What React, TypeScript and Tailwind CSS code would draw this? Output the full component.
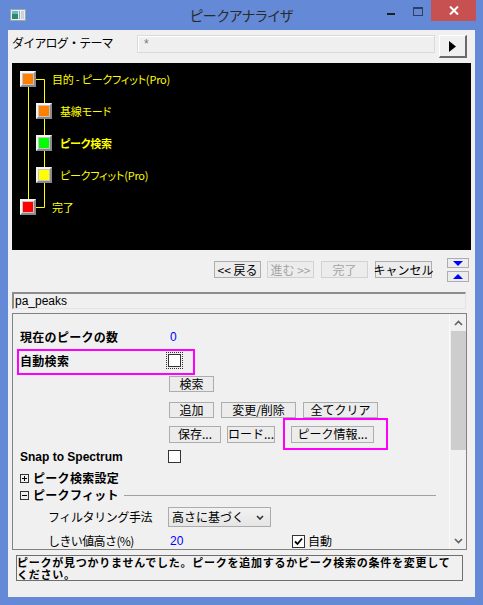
import React from 'react';

type BtnProps = { children: React.ReactNode; className?: string; disabled?: boolean };

function Btn({ children, className = '', disabled = false }: BtnProps) {
  return (
    <div
      className={`flex items-center justify-center border bg-[#ececec] text-[12px] leading-none whitespace-nowrap ${
        disabled ? 'border-[#d2d2d2] text-[#a3a3a3]' : 'border-[#adadad] text-black'
      } ${className}`}
    >
      {children}
    </div>
  );
}

function Check({ checked = false, focus = false }: { checked?: boolean; focus?: boolean }) {
  const box = (
    <div className="w-[13px] h-[13px] border border-[#333] bg-white flex items-center justify-center">
      {checked && (
        <svg width="9" height="9" viewBox="0 0 9 9">
          <path d="M1 4.5 L3.5 7 L8 1.5" stroke="#000" strokeWidth="1.8" fill="none" />
        </svg>
      )}
    </div>
  );
  if (!focus) return box;
  return <div className="p-[1px] border border-dotted border-[#333]">{box}</div>;
}

type NodeProps = { color: string; label: string; bold?: boolean; indent: string; gap: string };

function TreeNode({ color, label, bold = false, indent, gap }: NodeProps) {
  return (
    <div className={`flex items-center h-[32px] ${indent}`}>
      <div className="relative w-[16px] h-[16px] bg-[#c4c4c4] border-t-2 border-l-2 border-t-[#f4f4f4] border-l-[#f4f4f4] border-b-2 border-r-2 border-b-[#8a8a8a] border-r-[#8a8a8a] flex items-center justify-center">
        <div className={`w-[10px] h-[10px] ${color}`} />
      </div>
      <span
        className={`${gap} text-[11px] leading-none text-[#ffff00] [font-feature-settings:'palt'] tracking-[-0.2px] ${
          bold ? 'font-bold' : ''
        }`}
      >
        {label}
      </span>
    </div>
  );
}

function Chevron({ up }: { up?: boolean }) {
  return (
    <svg width="9" height="6" viewBox="0 0 9 6">
      <path d={up ? 'M1 5 L4.5 1.5 L8 5' : 'M1 1 L4.5 4.5 L8 1'} stroke="#606060" strokeWidth="1.6" fill="none" />
    </svg>
  );
}

export default function App() {
  return (
    <div className="w-[483px] h-[605px] bg-[#6489d6] flex flex-col font-['Noto_Sans_CJK_JP','Noto_Sans',sans-serif] text-black overflow-hidden">
      {/* タイトルバー */}
      <div className="h-[30px] flex">
        <div className="w-[100px] pl-[10px] pt-[9px]">
          <svg width="16" height="12" viewBox="0 0 16 12">
            <rect x="0.5" y="0.5" width="15" height="11" fill="#e8eef2" stroke="#9aa6b0" />
            <rect x="2" y="2" width="6" height="8" fill="#2e8a6a" />
            <rect x="2" y="2" width="6" height="3" fill="#6ab8c8" />
            <rect x="9" y="2" width="1" height="8" fill="#9aa6b0" />
            <rect x="11" y="2" width="3" height="8" fill="#c8d4dc" />
          </svg>
        </div>
        <div className="flex-1 flex justify-center pt-[5px] text-[14px] leading-[20px] text-[#2a2a2a] [font-feature-settings:'palt']">
          ピークアナライザ
        </div>
        <div className="w-[100px] flex items-start">
          <div className="ml-[4px] mt-[13px] w-[8px] h-[2px] bg-[#1e1e1e]" />
          <div className="ml-[18px] mt-[7px] w-[10px] h-[9px] border border-t-2 border-[#2f3f63]" />
          <div className="ml-[8px] w-[45px] h-[21px] bg-[#c75050] flex items-center justify-center">
            <svg width="10" height="9" viewBox="0 0 10 9">
              <path d="M1 0.5 L9 8.5 M9 0.5 L1 8.5" stroke="#fff" strokeWidth="2" />
            </svg>
          </div>
        </div>
      </div>

      {/* 本体 */}
      <div className="mx-[8px] h-[567px] bg-[#f0f0f0] flex flex-col">
        {/* ダイアログ・テーマ */}
        <div className="flex mt-[5px] h-[28px] pl-[4px]">
          <div className="w-[125px] text-[12px] leading-[16px] tracking-[-0.8px]">ダイアログ・テーマ</div>
          <div className="w-[298px] h-[18px] border border-[#dadada] bg-[#efefef] shadow-[inset_1px_1px_0_#ffffff] pl-[6px] text-[12px] leading-[16px] text-[#777] font-['Liberation_Sans',sans-serif]">
            *
          </div>
          <div className="ml-[4px] w-[28px] h-[23px] bg-[#f0f0f0] border-t border-l border-t-white border-l-white border-b-2 border-r-2 border-b-[#6a6a6a] border-r-[#6a6a6a] flex items-center justify-center">
            <svg width="7" height="11" viewBox="0 0 7 11">
              <path d="M0 0 L7 5.5 L0 11 Z" fill="#000" />
            </svg>
          </div>
        </div>

        {/* ツリー */}
        <div className="ml-[4px] w-[459px] h-[187px] bg-black relative">
          <svg className="absolute left-0 top-0" width="60" height="160">
            <path d="M16.5 23 V136 M24 16.5 H32.5 V144.5 H24" stroke="#ffff00" strokeWidth="1" fill="none" />
          </svg>
          <div className="relative flex flex-col">
            <TreeNode color="bg-[#ff8000]" label="目的 - ピークフィット(Pro)" indent="ml-[8px]" gap="ml-[16px]" />
            <TreeNode color="bg-[#ff8000]" label="基線モード" indent="ml-[24px]" gap="ml-[8px]" />
            <TreeNode color="bg-[#00ff00]" label="ピーク検索" bold indent="ml-[24px]" gap="ml-[8px]" />
            <TreeNode color="bg-[#ffff00]" label="ピークフィット(Pro)" indent="ml-[24px]" gap="ml-[8px]" />
            <TreeNode color="bg-[#ff0000]" label="完了" indent="ml-[8px]" gap="ml-[16px]" />
          </div>
        </div>

        {/* ナビゲーション */}
        <div className="flex justify-end items-start mt-[8px] pr-[6px]">
          <div className="flex mt-[3px] gap-[6px]">
            <Btn className="w-[47px] h-[17px]">&lt;&lt; 戻る</Btn>
            <Btn className="w-[47px] h-[17px]" disabled>進む &gt;&gt;</Btn>
            <Btn className="w-[47px] h-[17px] ml-[1px]" disabled>完了</Btn>
            <Btn className="w-[57px] h-[17px] ml-[1px]">キャンセル</Btn>
          </div>
          <div className="ml-[15px] flex flex-col gap-[3px]">
            <div className="w-[22px] h-[10px] border border-[#adadad] bg-[#ececec] flex items-center justify-center">
              <svg width="10" height="5" viewBox="0 0 10 5">
                <path d="M0 0 H10 L5 5 Z" fill="#0000ff" />
              </svg>
            </div>
            <div className="w-[22px] h-[11px] border border-[#adadad] bg-[#ececec] flex items-center justify-center">
              <svg width="10" height="5" viewBox="0 0 10 5">
                <path d="M0 5 H10 L5 0 Z" fill="#0000ff" />
              </svg>
            </div>
          </div>
        </div>

        {/* 名前 */}
        <div className="ml-[4px] mt-[10px] w-[454px] h-[17px] border-t-2 border-l-2 border-t-[#8c8c8c] border-l-[#8c8c8c] border-b border-r border-b-[#e4e4e4] border-r-[#e4e4e4] bg-[#f0f0f0] pl-[1px] text-[12px] leading-[14px] font-['Liberation_Sans',sans-serif]">
          pa_peaks
        </div>

        {/* プロパティ */}
        <div className="relative ml-[4px] mt-[4px] w-[455px] h-[237px] border border-[#828282] bg-[#f0f0f0] flex">
          <div className="flex-1 overflow-hidden pl-[7px] flex flex-col text-[12px] leading-none">
            <div className="flex items-center h-[18px] mt-[14px]">
              <div className="w-[148px] font-bold tracking-[0.3px]">現在のピークの数</div>
              <div className="ml-[2px] text-[#0000ff] font-['Liberation_Sans',sans-serif]">0</div>
            </div>
            <div className="flex items-center h-[18px] mt-[6px]">
              <div className="w-[146px] font-bold tracking-[0.3px]">自動検索</div>
              <Check focus />
            </div>
            <div className="flex mt-[6px] ml-[149px]">
              <Btn className="w-[45px] h-[16px]">検索</Btn>
            </div>
            <div className="flex mt-[10px] ml-[149px] gap-[7px]">
              <Btn className="w-[45px] h-[16px]">追加</Btn>
              <Btn className="w-[75px] h-[16px]">変更/削除</Btn>
              <Btn className="w-[75px] h-[16px]">全てクリア</Btn>
            </div>
            <div className="flex mt-[8px] ml-[149px]">
              <Btn className="w-[52px] h-[17px]">保存...</Btn>
              <Btn className="w-[48px] h-[17px] ml-[6px]">ロード...</Btn>
              <Btn className="w-[83px] h-[17px] ml-[16px]">ピーク情報...</Btn>
            </div>
            <div className="flex items-center h-[16px] mt-[6px]">
              <div className="w-[148px] font-bold font-['Liberation_Sans',sans-serif]">Snap to Spectrum</div>
              <Check />
            </div>
            <div className="flex items-center h-[16px] mt-[6px]">
              <div className="w-[9px] h-[9px] border border-[#333] flex items-center justify-center">
                <svg width="7" height="7" viewBox="0 0 7 7">
                  <path d="M3.5 1 V6 M1 3.5 H6" stroke="#000" strokeWidth="1" />
                </svg>
              </div>
              <div className="ml-[4px] font-bold tracking-[0.3px]">ピーク検索設定</div>
            </div>
            <div className="flex items-center h-[16px] mt-[1px] pr-[13px]">
              <div className="w-[9px] h-[9px] border border-[#333] flex items-center justify-center">
                <svg width="7" height="7" viewBox="0 0 7 7">
                  <path d="M1 3.5 H6" stroke="#000" strokeWidth="1" />
                </svg>
              </div>
              <div className="ml-[4px] font-bold tracking-[0.3px]">ピークフィット</div>
              <div className="flex-1 ml-[5px] h-px bg-[#a0a0a0]" />
            </div>
            <div className="flex items-center h-[20px] mt-[4px]">
              <div className="w-[148px] pl-[28px] tracking-[-0.4px]">フィルタリング手法</div>
              <div className="w-[103px] h-[20px] border border-[#acacac] bg-gradient-to-b from-[#f2f2f2] to-[#e5e5e5] flex items-center pl-[3px] pr-[6px]">
                <span className="flex-1">高さに基づく</span>
                <svg width="8" height="5" viewBox="0 0 8 5">
                  <path d="M1 1 L4 4 L7 1" stroke="#333" strokeWidth="1.6" fill="none" />
                </svg>
              </div>
            </div>
            <div className="flex items-center h-[16px] mt-[6px]">
              <div className="w-[150px] pl-[28px] tracking-[-0.6px]">しきい値高さ(%)</div>
              <div className="w-[122px] text-[#0000ff] font-['Liberation_Sans',sans-serif]">20</div>
              <Check checked />
              <div className="ml-[3px]">自動</div>
            </div>
          </div>
          <div className="w-[17px] border-l border-l-[#fafafa] flex flex-col items-center">
            <div className="h-[17px] flex items-center justify-center">
              <Chevron up />
            </div>
            <div className="w-[15px] h-[119px] bg-[#cdcdcd]" />
            <div className="flex-1" />
            <div className="h-[17px] flex items-center justify-center">
              <Chevron />
            </div>
          </div>
          {/* 注釈の枠 */}
          <div className="absolute left-[4px] top-[35px] w-[178px] h-[26px] border-2 border-[#ff00ff]" />
          <div className="absolute left-[270px] top-[104px] w-[105px] h-[32px] border-2 border-[#ff00ff]" />
        </div>

        {/* ステータス */}
        <div className="ml-[8px] mt-[5px] w-[447px] h-[26px] border border-[#6e6e6e] bg-[#f0f0f0] text-[11px] leading-[12px] font-bold whitespace-nowrap tracking-[0.75px]">
          <div>ピークが見つかりませんでした。ピークを追加するかピーク検索の条件を変更して</div>
          <div>ください。</div>
        </div>
      </div>
    </div>
  );
}
